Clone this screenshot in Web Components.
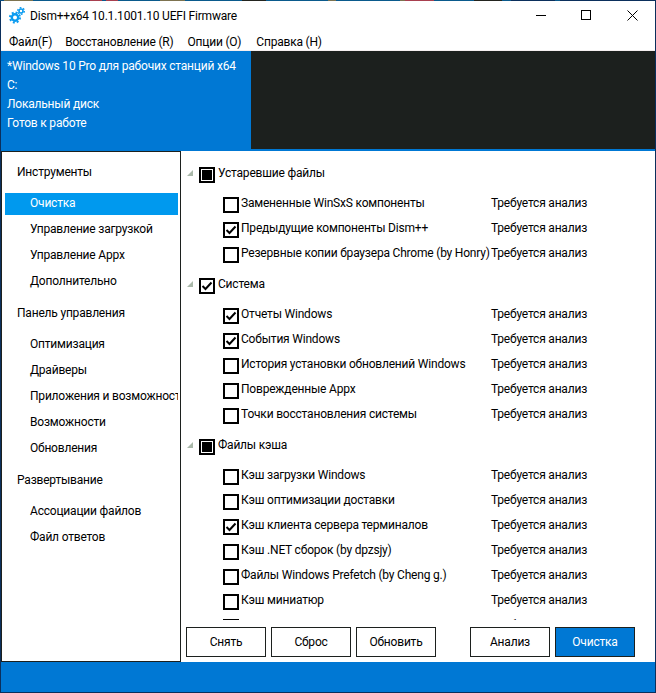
<!DOCTYPE html>
<html>
<head>
<meta charset="utf-8">
<title>Dism++</title>
<style>
    html, body { margin: 0; padding: 0; background: #fff; }
    body { font: 12px Roboto, "Liberation Sans", sans-serif; color: #000; }
</style>
</head>
<body>
<dism-app></dism-app>

<script>
const FONT = `Roboto, "Liberation Sans", sans-serif`

//#region title + menu
class DismTitlebar extends HTMLElement {
    constructor() {
        super()
        this.attachShadow({mode: "open"}).innerHTML = `
        <style>
            :host { display: flex; align-items: center; height: 28px; padding-left: 8px; background: #fff; font: 12px ${FONT}; }
            .gears { width: 18px; height: 18px; margin-right: 3px; margin-top: 2px; flex: none; }
            .name { flex: 1; margin-top: 2px; }
            .ctl { width: 45px; height: 28px; display: flex; align-items: center; justify-content: center; }
            .ctl svg { display: block; margin-top: 1px; }
            .ctl:not(:last-child) svg { margin-left: -2px; }
        </style>
        <svg class="gears" viewBox="0 0 18 18" fill="none" stroke="#0a9bf0">
            <circle cx="6" cy="10.500" r="3.200" stroke-width="2.400"/>
            <circle cx="6" cy="10.500" r="5" stroke-width="2" stroke-dasharray="1.960 1.967"/>
            <circle cx="12" cy="4" r="2" stroke-width="1.600"/>
            <circle cx="12" cy="4" r="3.300" stroke-width="1.400" stroke-dasharray="1.700 1.756"/>
        </svg>
        <span class="name"><slot></slot></span>
        <span class="ctl"><svg width="11" height="11" viewBox="0 0 11 11"><path d="M0 5.500h10" stroke="#000" fill="none"/></svg></span>
        <span class="ctl"><svg width="11" height="11" viewBox="0 0 11 11"><rect x="0.500" y="0.500" width="9" height="9" stroke="#000" fill="none"/></svg></span>
        <span class="ctl"><svg width="11" height="11" viewBox="0 0 11 11"><path d="M0.500 0.500l10 10M10.500 0.500l-10 10" stroke="#000" fill="none"/></svg></span>
        `
    }
}

class DismMenu extends HTMLElement {
    constructor() {
        super()
        this.attachShadow({mode: "open"}).innerHTML = `
        <style>
            :host { display: flex; align-items: center; gap: 13px; height: 21px; padding: 0 0 0 8px; background: #fff; border-bottom: 1px solid #f5eff0; font: 12px ${FONT}; }
            ::slotted(span) { position: relative; top: 2px; }
            ::slotted(span:nth-child(2)) { margin-right: 1px; }
            ::slotted(span:nth-child(3)) { margin-right: 2px; }
        </style>
        <slot></slot>
        `
    }
}
//#endregion title + menu

//#region header
class DismHeader extends HTMLElement {
    constructor() {
        super()
        this.attachShadow({mode: "open"}).innerHTML = `
        <style>
            :host { display: flex; height: 100px; background: #0078d4; }
            .info { width: 244px; padding: 6px 0 0 6px; color: #fff; font: 12px/19px ${FONT}; white-space: nowrap; }
            .dark { flex: 1; height: 98px; background: #1c201e; }
        </style>
        <div class="info"><slot></slot></div>
        <div class="dark"></div>
        `
    }
}
//#endregion header

//#region sidebar
class SideHead extends HTMLElement {
    constructor() {
        super()
        this.attachShadow({mode: "open"}).innerHTML = `
        <style>
            :host { display: flex; align-items: center; height: 26px; box-sizing: border-box; padding: 0 0 2px 12px; margin: 8px 0 7px; }
        </style>
        <slot></slot>
        `
    }
}

class SideItem extends HTMLElement {
    constructor() {
        super()
        this.attachShadow({mode: "open"}).innerHTML = `
        <style>
            :host { display: flex; align-items: center; height: 22px; box-sizing: border-box; margin-bottom: 4px; padding: 0 0 2px 25px; width: 173px; white-space: nowrap; overflow: hidden; }
            :host([active]) { background: #0099ee; color: #fff; }
        </style>
        <slot></slot>
        `
    }
}

class DismSidebar extends HTMLElement {
    constructor() {
        super()
        this.attachShadow({mode: "open"}).innerHTML = `
        <style>
            :host { display: block; flex: none; width: 180px; box-sizing: border-box; border: 1px solid #1c201e; padding: 0 0 0 3px; font: 12px ${FONT}; }
        </style>
        <slot></slot>
        `
    }
}
//#endregion sidebar

//#region cleanup list
class DismCheck extends HTMLElement {
    static get observedAttributes() { return ["state"] }
    constructor() {
        super()
        this.attachShadow({mode: "open"}).innerHTML = `
        <style>
            :host { display: block; flex: none; width: 16px; height: 16px; margin-top: 2px; box-sizing: border-box; border: 2px solid #000; background: #fff; }
            svg { display: block; width: 12px; height: 12px; }
        </style>
        <svg viewBox="0 0 12 12"></svg>
        `
    }
    attributeChangedCallback() {
        const svg = this.shadowRoot.querySelector("svg")
        const state = this.getAttribute("state")
        if (state == "on") {
            svg.innerHTML = `<path d="M1.500 6L4.500 9L10.500 2.500" fill="none" stroke="#000" stroke-width="2"/>`
        } else if (state == "mixed") {
            svg.innerHTML = `<rect x="1" y="1" width="10" height="10" fill="#000"/>`
        } else {
            svg.innerHTML = ""
        }
    }
}

class CleanGroup extends HTMLElement {
    constructor() {
        super()
        this.attachShadow({mode: "open"}).innerHTML = `
        <style>
            :host { display: block; }
            .head { display: flex; align-items: center; height: 25px; padding-left: 5px; }
            .tri { width: 8px; height: 8px; margin: 0 5px 2px 0; flex: none; }
            .label { margin: 0 0 2px 3px; }
            .rows { padding-top: 5px; padding-bottom: 6px; }
        </style>
        <div class="head">
            <svg class="tri" viewBox="0 0 8 8"><path d="M7 1V7H1Z" fill="#a9b8a9"/></svg>
            <dism-check></dism-check>
            <span class="label"></span>
        </div>
        <div class="rows"><slot></slot></div>
        `
    }
    connectedCallback() {
        this.shadowRoot.querySelector(".label").textContent = this.getAttribute("label")
        this.shadowRoot.querySelector("dism-check").setAttribute("state", this.getAttribute("state") || "off")
    }
}

class CleanRow extends HTMLElement {
    constructor() {
        super()
        this.attachShadow({mode: "open"}).innerHTML = `
        <style>
            :host { display: flex; align-items: center; height: 25px; padding-left: 42px; }
            span { margin-bottom: 2px; }
            .name { margin-left: 2px; width: 250px; flex: none; white-space: nowrap; overflow: hidden; }
        </style>
        <dism-check></dism-check>
        <span class="name"><slot></slot></span>
        <span>Требуется анализ</span>
        `
    }
    connectedCallback() {
        this.shadowRoot.querySelector("dism-check").setAttribute("state", this.getAttribute("state") || "off")
    }
}

class DismButton extends HTMLElement {
    constructor() {
        super()
        this.attachShadow({mode: "open"}).innerHTML = `
        <style>
            :host { display: flex; align-items: center; justify-content: center; width: 80px; height: 30px; box-sizing: border-box; border: 1px solid #1c201e; background: #fff; }
            :host([primary]) { background: #0078d4; color: #fff; }
        </style>
        <slot></slot>
        `
    }
}

class DismMain extends HTMLElement {
    constructor() {
        super()
        this.attachShadow({mode: "open"}).innerHTML = `
        <style>
            :host { display: flex; flex-direction: column; flex: 1; min-width: 0; font: 12px ${FONT}; }
            .list { height: 469px; padding-top: 10px; overflow: hidden; box-sizing: border-box; }
            .btns { display: flex; gap: 5px; padding: 7px 0 0 5px; }
        </style>
        <div class="list"><slot></slot></div>
        <div class="btns"><slot name="buttons"></slot></div>
        `
    }
}
//#endregion cleanup list

//#region app
class DismApp extends HTMLElement {
    constructor() {
        super()
        this.attachShadow({mode: "open"}).innerHTML = `
        <style>
            :host { display: flex; flex-direction: column; width: 656px; height: 693px; box-sizing: border-box; border: 1px solid #0b2f5c; border-top: 0; background: #fff; letter-spacing: -0.2px; }
            /* wallpaper showing through the 1px top edge of the window */
            .edge { height: 1px; flex: none; margin: 0 -1px; background: linear-gradient(90deg,
                #0a4f80 0 4px, #7d7350 4px 33px, #0a5a8c 33px 90px, #a8404f 90px 102px, #0a5a8c 102px 106px,
                #a8404f 106px 118px, #0a5a8c 118px 160px, #7d7350 160px 185px, #0a5a8c 185px 242px,
                #23241f 242px 266px, #0a5a8c 266px 328px, #7d7350 328px 336px, #0a5a8c 336px 400px,
                #7d7350 400px 405px, #a8404f 405px 434px, #0a5a8c 434px 474px, #23241f 474px 502px,
                #0a5a8c 502px 511px, #0b2f5c 511px 555px, #0a5a8c 555px 560px, #0b2f5c 560px); }
            .body { display: flex; flex: 1; min-height: 0; }
            .status { height: 30px; background: #0078d4; flex: none; }
        </style>
        <div class="edge"></div>
        <dism-titlebar>Dism++x64 10.1.1001.10 UEFI Firmware</dism-titlebar>
        <dism-menu>
            <span>Файл(F)</span><span>Восстановление (R)</span><span>Опции (O)</span><span>Справка (H)</span>
        </dism-menu>
        <dism-header>
            <div>*Windows 10 Pro для рабочих станций x64</div>
            <div>C:</div>
            <div>Локальный диск</div>
            <div>Готов к работе</div>
        </dism-header>
        <div class="body">
            <dism-sidebar>
                <side-head>Инструменты</side-head>
                <side-item active>Очистка</side-item>
                <side-item>Управление загрузкой</side-item>
                <side-item>Управление Appx</side-item>
                <side-item>Дополнительно</side-item>
                <side-head>Панель управления</side-head>
                <side-item>Оптимизация</side-item>
                <side-item>Драйверы</side-item>
                <side-item>Приложения и возможности</side-item>
                <side-item>Возможности</side-item>
                <side-item>Обновления</side-item>
                <side-head>Развертывание</side-head>
                <side-item>Ассоциации файлов</side-item>
                <side-item>Файл ответов</side-item>
            </dism-sidebar>
            <dism-main>
                <clean-group label="Устаревшие файлы" state="mixed">
                    <clean-row>Замененные WinSxS компоненты</clean-row>
                    <clean-row state="on">Предыдущие компоненты Dism++</clean-row>
                    <clean-row>Резервные копии браузера Chrome (by Honry)</clean-row>
                </clean-group>
                <clean-group label="Система" state="on">
                    <clean-row state="on">Отчеты Windows</clean-row>
                    <clean-row state="on">События Windows</clean-row>
                    <clean-row>История установки обновлений Windows</clean-row>
                    <clean-row>Поврежденные Appx</clean-row>
                    <clean-row>Точки восстановления системы</clean-row>
                </clean-group>
                <clean-group label="Файлы кэша" state="mixed">
                    <clean-row>Кэш загрузки Windows</clean-row>
                    <clean-row>Кэш оптимизации доставки</clean-row>
                    <clean-row state="on">Кэш клиента сервера терминалов</clean-row>
                    <clean-row>Кэш .NET сборок (by dpzsjy)</clean-row>
                    <clean-row>Файлы Windows Prefetch (by Cheng g.)</clean-row>
                    <clean-row>Кэш миниатюр</clean-row>
                    <clean-row></clean-row>
                </clean-group>
                <dism-button slot="buttons">Снять</dism-button>
                <dism-button slot="buttons">Сброс</dism-button>
                <dism-button slot="buttons">Обновить</dism-button>
                <span slot="buttons" style="width:24px"></span>
                <dism-button slot="buttons">Анализ</dism-button>
                <dism-button slot="buttons" primary>Очистка</dism-button>
            </dism-main>
        </div>
        <div class="status"></div>
        `
    }
}
//#endregion app

customElements.define("dism-check", DismCheck)
customElements.define("dism-titlebar", DismTitlebar)
customElements.define("dism-menu", DismMenu)
customElements.define("dism-header", DismHeader)
customElements.define("side-head", SideHead)
customElements.define("side-item", SideItem)
customElements.define("dism-sidebar", DismSidebar)
customElements.define("clean-group", CleanGroup)
customElements.define("clean-row", CleanRow)
customElements.define("dism-button", DismButton)
customElements.define("dism-main", DismMain)
customElements.define("dism-app", DismApp)
</script>
</body>
</html>
